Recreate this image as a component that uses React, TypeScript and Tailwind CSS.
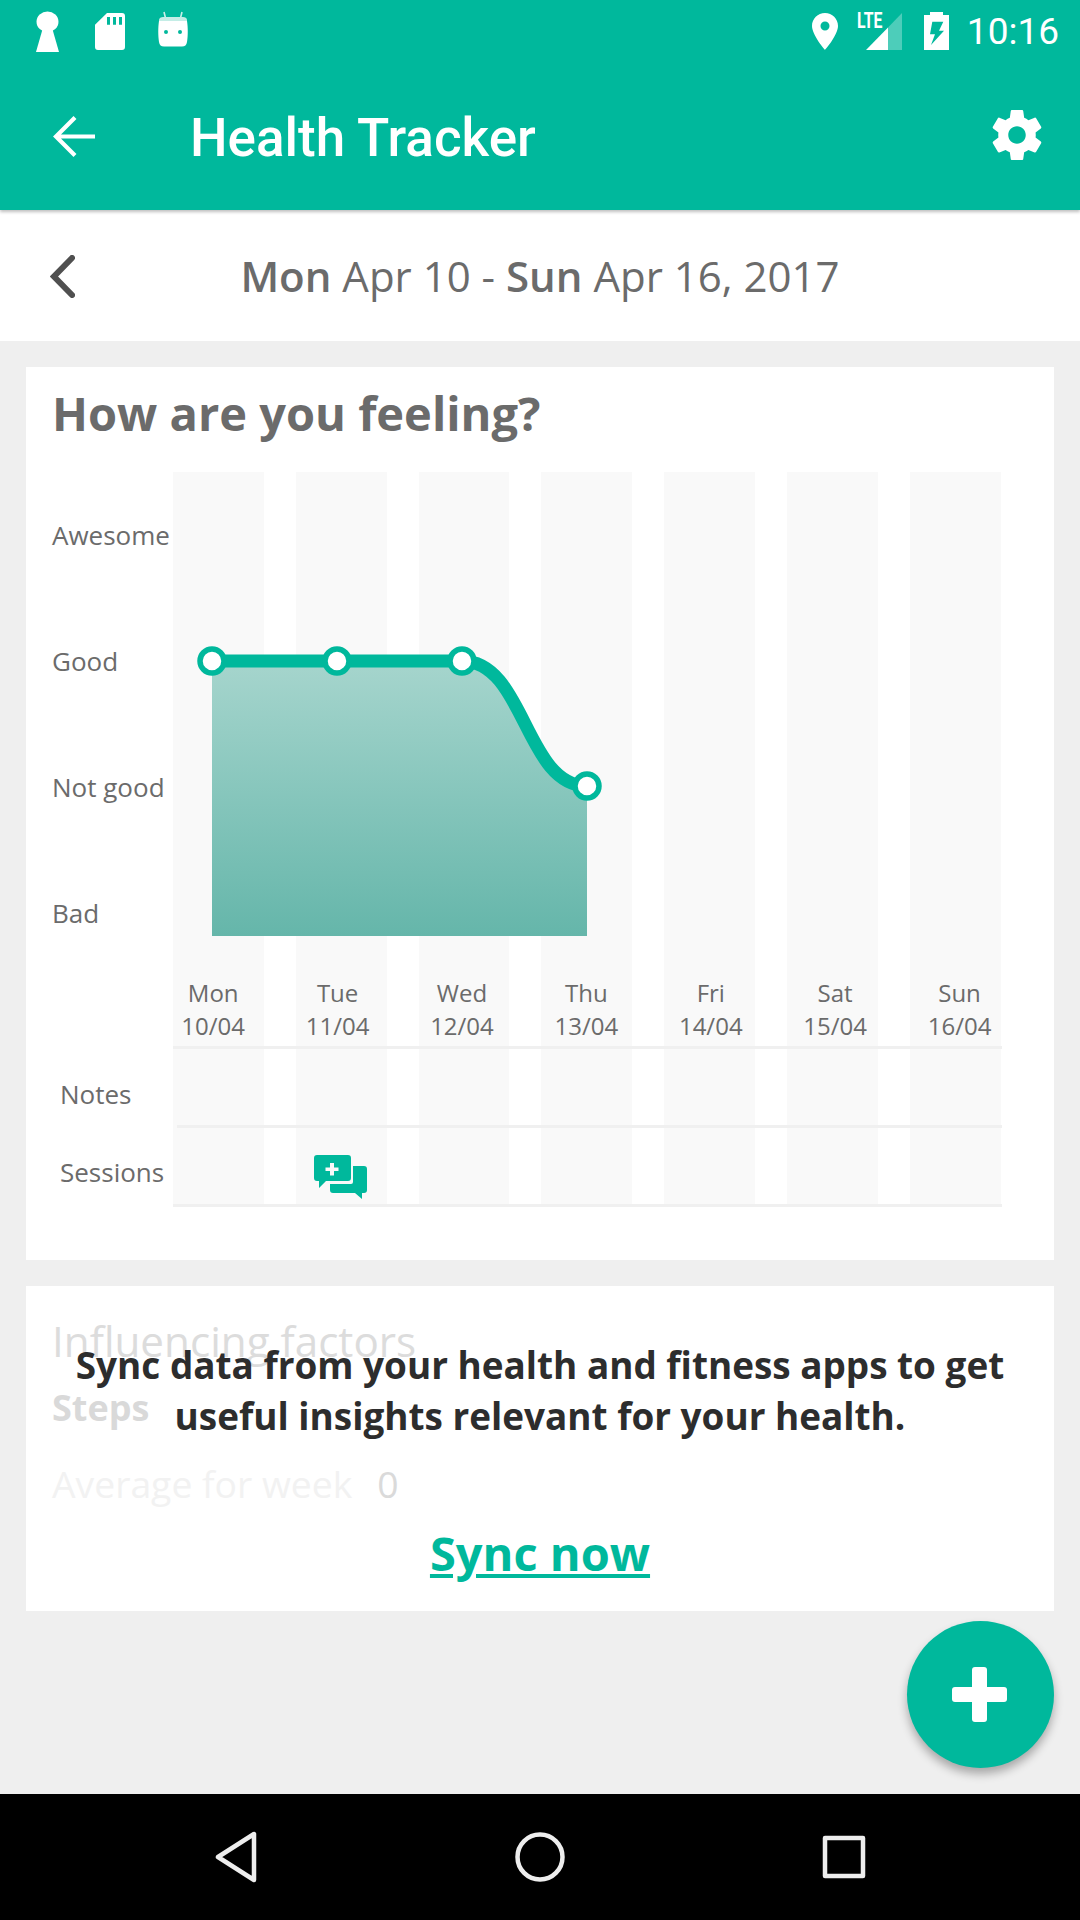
import React from 'react';

const days = [
  { name: 'Mon', date: '10/04' },
  { name: 'Tue', date: '11/04' },
  { name: 'Wed', date: '12/04' },
  { name: 'Thu', date: '13/04' },
  { name: 'Fri', date: '14/04' },
  { name: 'Sat', date: '15/04' },
  { name: 'Sun', date: '16/04' },
];

const moods = ['Awesome', 'Good', 'Not good', 'Bad'];
const points = [
  [39, 189],
  [164, 189],
  [289, 189],
  [414, 314],
];

const StatusBar = () => (
  <div className="flex h-[72px] items-start justify-between">
    <div className="flex items-start">
      <svg className="ml-[36px] mt-[11px]" width="23" height="41" viewBox="0 0 22 42" preserveAspectRatio="none" fill="#fff">
        <circle cx="11" cy="11" r="10.5" />
        <path d="M7 16h8l7 26H0z" />
      </svg>
      <svg className="ml-[36px] mt-[13px]" width="30" height="37" viewBox="0 0 30 38" preserveAspectRatio="none" fill="#fff">
        <path fillRule="evenodd" d="M12 0h15a3 3 0 0 1 3 3v32a3 3 0 0 1-3 3H3a3 3 0 0 1-3-3V12zM12 4v8h3V4zM18 4v8h3V4zM24 4v8h3V4z" />
      </svg>
      <svg className="ml-[33px] mt-[11px]" width="30" height="37" viewBox="0 0 30 37" fill="#fff">
        <path d="M6 1l1.5 6M24 1l-1.5 6" stroke="#ccefe9" strokeWidth="1.6" fill="none" />
        <path d="M5 6h20c2 0 4 1 4 3v1H1V9c0-2 2-3 4-3z" fill="#c4ede6" />
        <path fillRule="evenodd" d="M1 10h28c1 6 1 15 0 21-.5 3-2 4.500-5 4.500H6c-3 0-4.500-1.500-5-4.500-1-6-1-15 0-21zM8 19a2 2 0 1 0 0 4 2 2 0 0 0 0-4zM22 19a2 2 0 1 0 0 4 2 2 0 0 0 0-4z" />
      </svg>
    </div>
    <div className="flex items-start">
      <svg className="mt-[13px]" width="26" height="37" viewBox="0 0 26 37" fill="#fff">
        <path fillRule="evenodd" d="M13 0C5.800 0 0 5.800 0 13c0 9 13 24 13 24s13-15 13-24C26 5.800 20.200 0 13 0zm0 8.500a4.500 4.500 0 1 1 0 9 4.500 4.500 0 0 1 0-9z" />
      </svg>
      <div className="relative ml-[19px] mt-[13px] h-[37px] w-[45px]">
        <svg className="absolute left-0 top-0" width="45" height="37" viewBox="0 0 45 37">
          <path d="M45 0v37H31V14.400z" fill="#fff" fillOpacity="0.3" />
          <path d="M9 37l22-22.600V37z" fill="#fff" />
        </svg>
        <span className="absolute left-0 top-[-5px] origin-left scale-x-[0.72] font-['Roboto',sans-serif] text-[22px] font-bold leading-[26px] text-white">LTE</span>
      </div>
      <svg className="ml-[22px] mt-[12px]" width="25" height="38" viewBox="0 0 25 38" fill="#fff">
        <path fillRule="evenodd" d="M6 0h13v3h6v35H0V3h6zM8.300 9.700h11L15 18.700h5L7 33l4-10.700H6z" />
      </svg>
      <span className="ml-[18px] mr-[21px] mt-[10px] font-['Roboto',sans-serif] text-[37px] leading-[44px] text-white">10:16</span>
    </div>
  </div>
);

const Header = () => (
  <div className="relative z-10 bg-[#00b89c] shadow-[0_2px_3px_rgba(0,0,0,0.25)]">
    <StatusBar />
    <div className="flex h-[138px] items-start">
      <svg className="ml-[53px] mt-[44px]" width="42" height="41" viewBox="0 0 42 41" fill="none" stroke="#fff" strokeWidth="4.200">
        <path d="M42 20.500H3M22 1.500L3 20.500l19 19" />
      </svg>
      <span className="ml-[95px] mt-[38px] font-['Roboto',sans-serif] text-[53px] font-medium leading-[56px] text-white">Health Tracker</span>
      <svg className="ml-auto mr-[38px] mt-[38px]" width="50" height="50" viewBox="2 2 20 20" fill="#fff">
        <path d="M19.430 12.980c.04-.32.07-.64.07-.98s-.03-.66-.07-.98l2.110-1.650c.19-.15.24-.42.12-.64l-2-3.460c-.12-.22-.39-.3-.61-.22l-2.490 1c-.52-.4-1.080-.73-1.690-.98l-.38-2.650C14.460 2.180 14.250 2 14 2h-4c-.25 0-.46.18-.49.42l-.38 2.650c-.61.25-1.170.59-1.690.98l-2.490-1c-.23-.09-.49 0-.61.22l-2 3.460c-.13.22-.07.49.12.64l2.110 1.650c-.04.32-.07.65-.07.98s.03.66.07.98l-2.110 1.650c-.19.15-.24.42-.12.64l2 3.460c.12.22.39.3.61.22l2.490-1c.52.4 1.080.73 1.690.98l.38 2.650c.03.24.24.42.49.42h4c.25 0 .46-.18.49-.42l.38-2.650c.61-.25 1.170-.59 1.690-.98l2.490 1c.23.09.49 0 .61-.22l2-3.460c.12-.22.07-.49-.12-.64l-2.110-1.650zM12 15.500c-1.930 0-3.500-1.570-3.500-3.500s1.570-3.500 3.500-3.500 3.500 1.570 3.500 3.500-1.570 3.500-3.500 3.500z" />
      </svg>
    </div>
  </div>
);

const DateBar = () => (
  <div className="relative flex h-[131px] items-center justify-center bg-white font-['Open_Sans',sans-serif] text-[42px] text-[#6b6b6b]">
    <svg className="absolute left-[50px] top-[45px]" width="25" height="43" viewBox="0 0 25 43" fill="none" stroke="#505050" strokeWidth="6" strokeLinecap="round">
      <path d="M22 3L4 21.500 22 40" />
    </svg>
    <span>
      <b className="font-semibold">Mon</b> Apr 10 - <b className="font-semibold">Sun</b> Apr 16, 2017
    </span>
  </div>
);

const Chart = () => (
  <svg className="absolute left-0 top-0" width="640" height="500" viewBox="0 0 640 500" fill="none">
    <defs>
      <linearGradient id="feeling" x1="0" y1="189" x2="0" y2="464" gradientUnits="userSpaceOnUse">
        <stop offset="0" stopColor="#a6d5cd" />
        <stop offset="1" stopColor="#65b6aa" />
      </linearGradient>
    </defs>
    <path d="M39 189H289C352 189 352 314 414 314V464H39Z" fill="url(#feeling)" />
    <path d="M39 189H289C352 189 352 314 414 314" stroke="#00b89c" strokeWidth="13" />
    {points.map(([x, y]) => (
      <circle key={x} cx={x} cy={y} r="12" fill="#fff" stroke="#00b89c" strokeWidth="5.500" />
    ))}
  </svg>
);

const FeelingCard = () => (
  <div className="h-[893px] bg-white pl-[26px] font-['Open_Sans',sans-serif] text-[#6b6b6b]">
    <h2 className="h-[105px] pt-[16px] text-[47px] font-bold leading-[60px]">How are you feeling?</h2>
    <div className="relative w-[950px]">
      <div className="absolute bottom-0 left-[121px] top-0 flex gap-[32px]">
        {days.map((d) => (
          <div key={d.date} className="h-[734px] w-[90.800px] bg-[#f9f9f9]" />
        ))}
      </div>
      <div className="relative h-[500px]">
        <div className="flex flex-col">
          {moods.map((m) => (
            <div key={m} className="flex h-[126px] items-center text-[26px] leading-[36px]">{m}</div>
          ))}
        </div>
        <div className="absolute left-[121px] top-0">
          <Chart />
        </div>
      </div>
      <div className="relative ml-[121px] h-[77px] border-b-[3px] border-[#f0f0f0] pt-[4px]">
        <div className="-ml-[22px] flex">
          {days.map((d) => (
            <div key={d.date} className="w-[124.400px] shrink-0 text-center text-[24px] leading-[33px]">
              <div>{d.name}</div>
              <div>{d.date}</div>
            </div>
          ))}
        </div>
      </div>
      <div className="relative h-[79px] pl-[8px] pt-[27px] text-[26px] leading-[36px]">
        Notes
        <div className="absolute bottom-0 left-[125px] h-[3px] w-[825px] bg-[#f0f0f0]" />
      </div>
      <div className="relative h-[79px] pl-[8px] pt-[26px] text-[26px] leading-[36px]">
        Sessions
        <svg className="absolute left-[262px] top-[27px]" width="53" height="45" viewBox="0 0 53 45" fill="#00b89c">
          <path fillRule="evenodd" d="M3 0h31a3 3 0 0 1 3 3v20a3 3 0 0 1-3 3H12l-7 7v-7H3a3 3 0 0 1-3-3V3a3 3 0 0 1 3-3zM16 8v4.500h-4.500v3.500H16v4.500h4V16h4.500v-3.500H20V8z" />
          <path d="M39 11h11a3 3 0 0 1 3 3v21a3 3 0 0 1-3 3h-2v6l-7-6H19a3 3 0 0 1-3-3v-6h21a2 2 0 0 0 2-2z" />
        </svg>
        <div className="absolute bottom-0 left-[121px] h-[3px] w-[829px] bg-[#f0f0f0]" />
      </div>
    </div>
  </div>
);

const SyncCard = () => (
  <div className="relative mt-[26px] h-[325px] bg-white pl-[26px] font-['Open_Sans',sans-serif]">
    <div className="pt-[27px] text-[42.200px] leading-[56px] text-[#dcdcdc]">Influencing factors</div>
    <div className="mt-[15px] text-[36px] font-bold leading-[48px] text-[#d9d9d9]">Steps</div>
    <div className="mt-[27px] flex text-[37.300px] leading-[50px] text-[#f2f2f2]">
      Average for week
      <span className="ml-[25px] text-[#dadada]">0</span>
    </div>
    <div className="absolute inset-x-0 top-[54px] flex flex-col items-center">
      <p className="text-center text-[36.900px] font-bold leading-[51px] text-[#2d2d2d]">
        Sync data from your health and fitness apps to get
        <br />
        useful insights relevant for your health.
      </p>
      <a className="mt-[81px] text-[47px] font-bold leading-[60px] text-[#00b89c] underline">Sync now</a>
    </div>
  </div>
);

const NavBar = () => (
  <div className="flex h-[126px] items-start bg-black">
    <svg className="ml-[214px] mt-[36px]" width="44" height="54" viewBox="0 0 44 54" fill="none" stroke="#eee" strokeWidth="4.500" strokeLinejoin="round">
      <path d="M40 4v46L4 27z" />
    </svg>
    <svg className="ml-[256px] mt-[37px]" width="52" height="52" viewBox="0 0 52 52" fill="none" stroke="#eee" strokeWidth="4.500">
      <circle cx="26" cy="26" r="22.500" />
    </svg>
    <svg className="ml-[256px] mt-[41px]" width="44" height="44" viewBox="0 0 44 44" fill="none" stroke="#eee" strokeWidth="4.500" strokeLinejoin="round">
      <path d="M3 3h38v38H3z" />
    </svg>
  </div>
);

export default function App() {
  return (
    <div className="relative flex h-[1920px] w-[1080px] flex-col overflow-hidden bg-[#efefef]">
      <Header />
      <DateBar />
      <div className="flex-1 px-[26px] pt-[26px]">
        <FeelingCard />
        <SyncCard />
      </div>
      <NavBar />
      <button className="absolute left-[907px] top-[1621px] flex h-[147px] w-[147px] items-center justify-center rounded-full bg-[#00b89c] shadow-[0_6px_10px_rgba(0,0,0,0.3)]">
        <svg className="-ml-[2px]" width="55" height="55" viewBox="0 0 55 55" fill="#fff">
          <rect x="20" y="0" width="15" height="55" rx="3" />
          <rect x="0" y="20" width="55" height="15" rx="3" />
        </svg>
      </button>
    </div>
  );
}
